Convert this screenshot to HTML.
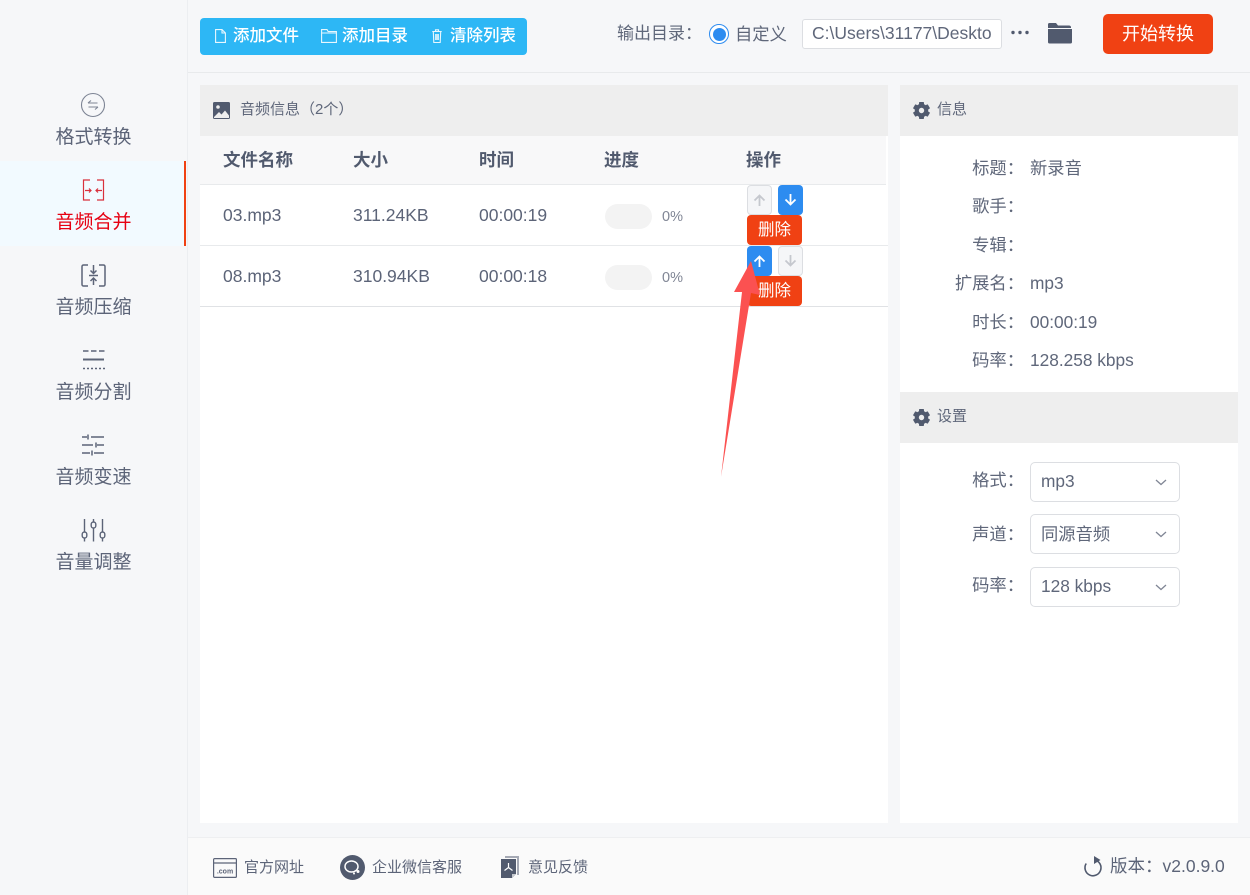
<!DOCTYPE html>
<html lang="zh"><head><meta charset="utf-8"><title>音频合并</title>
<style>
*{box-sizing:border-box;margin:0;padding:0}
html,body{width:1250px;height:895px;overflow:hidden}
body{background:#f6f7f9;font-family:"Liberation Sans","Noto Sans CJK SC",sans-serif;color:#515a6e;position:relative}
.a{position:absolute;white-space:nowrap}
.t{position:absolute;white-space:nowrap;line-height:20px}
svg{position:absolute;overflow:visible}
.nav{position:absolute;left:0;width:187px;text-align:center;font-size:19px;line-height:24px;color:#5c6478}
.th{font-size:17.5px;font-weight:700;color:#515a6e}
.td{font-size:17.5px;color:#5c6478}
.lb{position:absolute;right:226px;font-size:17.3px;line-height:20px;white-space:nowrap;color:#5f677a}
.v{position:absolute;left:1030px;font-size:17.3px;line-height:20px;white-space:nowrap;color:#5f677a}
.sel{position:absolute;left:1030px;width:150px;height:40px;background:#fff;border:1px solid #dcdee2;border-radius:5px;font-size:17.3px;line-height:37px;padding-left:10px;color:#5f677a}
.btn{position:absolute;width:25px;height:30px;border-radius:4px}
.on{background:#2d8cf0}
.off{background:#f5f6f8;border:1px solid #dcdee2}
.del{position:absolute;left:747px;width:55px;height:30px;border-radius:4px;background:#f04113;color:#fff;text-align:center;font-size:16.5px;line-height:31px}
.bar{position:absolute;left:605px;width:47px;height:25px;border-radius:13px;background:#f3f3f3}
.pct{position:absolute;left:662px;font-size:14.5px;line-height:20px;color:#808695}
.tool{position:absolute;top:18px;font-size:16.5px;line-height:37px;color:#fff;font-weight:500}
.foot{position:absolute;top:858px;font-size:15px;line-height:20px;color:#5c6478;white-space:nowrap}
</style></head><body>

<!-- top/bottom frame -->
<div class="a" style="left:187px;top:0;width:1px;height:895px;background:#eceef1"></div>
<div class="a" style="left:188px;top:72px;width:1062px;height:1px;background:#e8eaec"></div>
<div class="a" style="left:188px;top:837px;width:1062px;height:58px;background:#fafafa;border-top:1px solid #eeeff1"></div>

<!-- sidebar -->
<div class="a" style="left:0;top:161px;width:186px;height:85px;background:#f2faff;border-right:2px solid #f04113"></div>
<svg style="left:80px;top:92px" width="26" height="26" viewBox="0 0 26 26" fill="none" stroke="#7d8494" stroke-width="1.1"><circle cx="13" cy="13" r="11.5"/><path d="M8 11h9.500M8 11l3-2.500M18 15H8.500M18 15l-3 2.500"/></svg>
<div class="nav" style="top:126px">格式转换</div>
<svg style="left:82px;top:179px" width="23" height="22" viewBox="0 0 23 22" fill="none" stroke="#d9303c" stroke-width="1.200"><path d="M8 1H1.500v20H8M15 1h6.500v20H15M3 11.500h6M7 9.500l2 2-2 2M20 11.500h-6M16 9.500l-2 2 2 2"/></svg>
<div class="nav" style="top:211px;color:#e60012">音频合并</div>
<svg style="left:81px;top:264px" width="25" height="23" viewBox="0 0 25 23" fill="none" stroke="#5c6478" stroke-width="1.500"><path d="M7 1H2.500A1.500 1.500 0 0 0 1 2.500v18A1.500 1.500 0 0 0 2.500 22H7M18 1h4.500A1.500 1.500 0 0 1 24 2.500v18a1.500 1.500 0 0 1-1.500 1.500H18M12.500 1v8M9.500 6.500l3 3 3-3M8 11.500h9M12.500 21v-6.500M9.500 17l3-3 3 3"/></svg>
<div class="nav" style="top:296px">音频压缩</div>
<svg style="left:82px;top:349px" width="23" height="22" viewBox="0 0 23 22" fill="none" stroke="#5c6478"><path stroke-width="1.500" stroke-dasharray="5.500 2.500" d="M1 2h22"/><path stroke-width="2" d="M1 10.500h21"/><path stroke-width="1.500" stroke-dasharray="2 2" d="M1 19.500h22"/></svg>
<div class="nav" style="top:381px">音频分割</div>
<svg style="left:81px;top:434px" width="24" height="22" viewBox="0 0 24 22" fill="none" stroke="#5c6478" stroke-width="1.500"><path d="M1 3h5M10 3h13M7 .5v5M1 11h11M16 11h7M15 8.500v5M1 19h8M13 19h10M11 16.500v5"/></svg>
<div class="nav" style="top:466px">音频变速</div>
<svg style="left:81px;top:518px" width="25" height="24" viewBox="0 0 25 24" fill="none" stroke="#5c6478" stroke-width="1.400"><path d="M3.500 1v13M3.500 20v3.500M12.500 1v3M12.500 10v13.500M21.500 1v13M21.500 20v3.500"/><rect x="1.200" y="14" width="4.600" height="6" rx="2.300"/><rect x="10.200" y="4" width="4.600" height="6" rx="2.300"/><rect x="19.200" y="14" width="4.600" height="6" rx="2.300"/></svg>
<div class="nav" style="top:551px">音量调整</div>

<!-- toolbar -->
<div class="a" style="left:200px;top:18px;width:327px;height:37px;background:#2db7f5;border-radius:4px"></div>
<svg style="left:215px;top:29px" width="11" height="14" viewBox="0 0 11 14" fill="none" stroke="#e8f7fe" stroke-width="1.100"><path d="M.6.600h6.400l3.400 3.400v9.400H.6zM7 .6V4h3.400"/></svg>
<div class="tool" style="left:233px">添加文件</div>
<svg style="left:321px;top:29px" width="16" height="14" viewBox="0 0 16 14" fill="none" stroke="#e8f7fe" stroke-width="1.100"><path d="M.6 13.400V.6h5.400l1.200 2h8.200v10.800zM.6 4h14.800"/></svg>
<div class="tool" style="left:342px">添加目录</div>
<svg style="left:432px;top:29px" width="10" height="14" viewBox="0 0 10 14" fill="none" stroke="#e8f7fe" stroke-width="1.100"><path d="M.3 2.500h9.400M3.500 2.500V.8h3v1.700M1.300 2.500l.5 11h6.400l.5-11M3.700 5v6M5 5v6M6.300 5v6"/></svg>
<div class="tool" style="left:450px">清除列表</div>

<div class="t" style="left:617px;top:24px;font-size:17px;color:#5f677a">输出目录：</div>
<div class="a" style="left:709px;top:24px;width:20px;height:20px;border:1.500px solid #2d8cf0;border-radius:50%;background:#fff"></div>
<div class="a" style="left:712.500px;top:27.500px;width:13px;height:13px;border-radius:50%;background:#2d8cf0"></div>
<div class="t" style="left:735px;top:24px;font-size:17.300px;color:#5f677a">自定义</div>
<div class="a" style="left:802px;top:19px;width:200px;height:30px;background:#fff;border:1px solid #dcdee2;border-radius:3px;font-size:17.500px;line-height:27px;padding-left:9px;color:#5f677a;overflow:hidden">C:\Users\31177\Deskto</div>
<svg style="left:1011px;top:30px" width="18" height="5" viewBox="0 0 18 5" fill="#515a6e"><circle cx="2" cy="2.500" r="1.700"/><circle cx="9" cy="2.500" r="1.700"/><circle cx="16" cy="2.500" r="1.700"/></svg>
<svg style="left:1047px;top:22px" width="25" height="22" viewBox="0 0 25 22" fill="#515a6e"><path d="M1 2.500A1.500 1.500 0 0 1 2.500 1h6.500l2 2.500h11A2 2 0 0 1 24 5v1H1zM1 7h24v13a1.500 1.500 0 0 1-1.500 1.500h-21A1.500 1.500 0 0 1 1 20z"/></svg>
<div class="a" style="left:1103px;top:14px;width:110px;height:40px;background:#f04113;border-radius:5px;color:#fff;text-align:center;font-size:18px;line-height:40px">开始转换</div>

<!-- main panel -->
<div class="a" style="left:200px;top:85px;width:688px;height:738px;background:#fff"></div>
<div class="a" style="left:200px;top:85px;width:688px;height:51px;background:#eeeeee"></div>
<svg style="left:213px;top:102px" width="17" height="17" viewBox="0 0 17 17"><rect width="17" height="17" rx="1.500" fill="#515a6e"/><circle cx="5" cy="5" r="1.800" fill="#eee"/><path d="M1 15l5-5 2.500 2.500L12 8.500l4 5V16H1z" fill="#eee"/></svg>
<div class="t" style="left:240px;top:100px;font-size:15px;color:#5f677a">音频信息（2个）</div>

<div class="a" style="left:200px;top:136px;width:686px;height:49px;background:#f8f8f9;border-bottom:1px solid #e8eaec"></div>
<div class="t th" style="left:223px;top:150px">文件名称</div>
<div class="t th" style="left:353px;top:150px">大小</div>
<div class="t th" style="left:479px;top:150px">时间</div>
<div class="t th" style="left:604px;top:150px">进度</div>
<div class="t th" style="left:746px;top:150px">操作</div>

<div class="a" style="left:200px;top:245px;width:688px;height:1px;background:#e8eaec"></div>
<div class="a" style="left:200px;top:306px;width:688px;height:1px;background:#e0e2e5"></div>

<div class="t td" style="left:223px;top:205px">03.mp3</div>
<div class="t td" style="left:353px;top:205px">311.24KB</div>
<div class="t td" style="left:479px;top:205px">00:00:19</div>
<div class="bar" style="top:204px"></div><div class="pct" style="top:207px">0%</div>

<div class="t td" style="left:223px;top:266px">08.mp3</div>
<div class="t td" style="left:353px;top:266px">310.94KB</div>
<div class="t td" style="left:479px;top:266px">00:00:18</div>
<div class="bar" style="top:265px"></div><div class="pct" style="top:268px">0%</div>

<!-- row 1 buttons -->
<div class="btn off" style="left:747px;top:185px"></div>
<svg style="left:753px;top:194px" width="13" height="12" viewBox="0 0 13 12" fill="none" stroke="#c5c8ce" stroke-width="1.800"><path d="M6.500 12V1.500M1.500 6.500l5-5 5 5"/></svg>
<div class="btn on" style="left:778px;top:185px"></div>
<svg style="left:784px;top:194px" width="13" height="12" viewBox="0 0 13 12" fill="none" stroke="#fff" stroke-width="1.800"><path d="M6.500 0v10.500M1.500 5.500l5 5 5-5"/></svg>
<div class="del" style="top:215px">删除</div>
<!-- row 2 buttons -->
<div class="btn on" style="left:747px;top:246px"></div>
<svg style="left:753px;top:255px" width="13" height="12" viewBox="0 0 13 12" fill="none" stroke="#fff" stroke-width="1.800"><path d="M6.500 12V1.500M1.500 6.500l5-5 5 5"/></svg>
<div class="btn off" style="left:778px;top:246px"></div>
<svg style="left:784px;top:255px" width="13" height="12" viewBox="0 0 13 12" fill="none" stroke="#c5c8ce" stroke-width="1.800"><path d="M6.500 0v10.500M1.500 5.500l5 5 5-5"/></svg>
<div class="del" style="top:276px">删除</div>

<!-- red arrow -->
<svg style="left:0;top:0" width="1250" height="895" viewBox="0 0 1250 895"><path d="M751 261L760 295L751 293L721 477L742 292L734 292Z" fill="#fb5151"/></svg>

<!-- right panel -->
<div class="a" style="left:900px;top:85px;width:338px;height:738px;background:#fff"></div>
<div class="a" style="left:900px;top:85px;width:338px;height:51px;background:#eeeeee"></div>
<svg style="left:913px;top:102px" width="17" height="17" viewBox="0 0 24 24" fill="#515a6e"><circle cx="12" cy="12" r="9.500"/><rect x="8.500" y="0" width="7" height="24" rx="1"/><rect x="8.500" y="0" width="7" height="24" rx="1" transform="rotate(60 12 12)"/><rect x="8.500" y="0" width="7" height="24" rx="1" transform="rotate(120 12 12)"/><circle cx="12" cy="12" r="3.800" fill="#eee"/></svg>
<div class="t" style="left:937px;top:100px;font-size:15px;color:#5f677a">信息</div>

<div class="lb" style="top:158px">标题：</div><div class="v" style="top:158px">新录音</div>
<div class="lb" style="top:196px">歌手：</div>
<div class="lb" style="top:235px">专辑：</div>
<div class="lb" style="top:273px">扩展名：</div><div class="v" style="top:273px">mp3</div>
<div class="lb" style="top:312px">时长：</div><div class="v" style="top:312px">00:00:19</div>
<div class="lb" style="top:350px">码率：</div><div class="v" style="top:350px">128.258 kbps</div>

<div class="a" style="left:900px;top:392px;width:338px;height:51px;background:#eeeeee"></div>
<svg style="left:913px;top:409px" width="17" height="17" viewBox="0 0 24 24" fill="#515a6e"><circle cx="12" cy="12" r="9.500"/><rect x="8.500" y="0" width="7" height="24" rx="1"/><rect x="8.500" y="0" width="7" height="24" rx="1" transform="rotate(60 12 12)"/><rect x="8.500" y="0" width="7" height="24" rx="1" transform="rotate(120 12 12)"/><circle cx="12" cy="12" r="3.800" fill="#eee"/></svg>
<div class="t" style="left:937px;top:407px;font-size:15px;color:#5f677a">设置</div>

<div class="lb" style="top:470px">格式：</div><div class="sel" style="top:462px">mp3</div>
<div class="lb" style="top:524px">声道：</div><div class="sel" style="top:514px;line-height:38px">同源音频</div>
<div class="lb" style="top:575px">码率：</div><div class="sel" style="top:567px">128 kbps</div>
<svg style="left:1155px;top:479px" width="12" height="7" viewBox="0 0 12 7" fill="none" stroke="#808695" stroke-width="1.300"><path d="M1 1l5 4.500L11 1"/></svg>
<svg style="left:1155px;top:531px" width="12" height="7" viewBox="0 0 12 7" fill="none" stroke="#808695" stroke-width="1.300"><path d="M1 1l5 4.500L11 1"/></svg>
<svg style="left:1155px;top:584px" width="12" height="7" viewBox="0 0 12 7" fill="none" stroke="#808695" stroke-width="1.300"><path d="M1 1l5 4.500L11 1"/></svg>

<!-- footer -->
<svg style="left:213px;top:858px" width="24" height="20" viewBox="0 0 24 20" fill="none" stroke="#5c6478" stroke-width="1.200"><rect x=".6" y=".6" width="22.800" height="18.800" rx="1"/><path d="M.6 5h22.800"/><text x="12" y="15.500" text-anchor="middle" font-size="7" font-weight="700" fill="#5c6478" stroke="none" font-family="Liberation Sans">.com</text></svg>
<div class="foot" style="left:244px">官方网址</div>
<svg style="left:340px;top:855px" width="25" height="25" viewBox="0 0 25 25"><circle cx="12.500" cy="12.500" r="12.500" fill="#515a6e"/><ellipse cx="11.500" cy="11.500" rx="6.500" ry="5.500" fill="none" stroke="#fff" stroke-width="1.500"/><circle cx="18" cy="16.500" r="1.500" fill="#fff"/><circle cx="14" cy="18.500" r="1" fill="#fff"/></svg>
<div class="foot" style="left:372px">企业微信客服</div>
<svg style="left:501px;top:856px" width="18" height="23" viewBox="0 0 18 23"><path d="M4 0h14v19h-2V2H4z" fill="#a5a9b4"/><path d="M0 3h15v15l-4 4H0z" fill="#515a6e"/><path d="M7.500 7v4.500M7.500 11.500L3.500 14.500M7.500 11.500l4 3" stroke="#fff" stroke-width="1.200" fill="none"/><path d="M11 18h4l-4 4z" fill="#c5c8ce"/></svg>
<div class="foot" style="left:528px">意见反馈</div>
<svg style="left:1083px;top:856px" width="20" height="21" viewBox="0 0 20 21" fill="none" stroke="#515a6e" stroke-width="1.600"><path d="M12 4A8 8 0 1 1 3.200 7.500"/><path d="M11 0l6.500 4-6.500 4z" fill="#515a6e" stroke="none"/></svg>
<div class="t" style="left:1110px;top:856px;font-size:17.500px;color:#5c6478">版本：v2.0.9.0</div>

</body></html>
